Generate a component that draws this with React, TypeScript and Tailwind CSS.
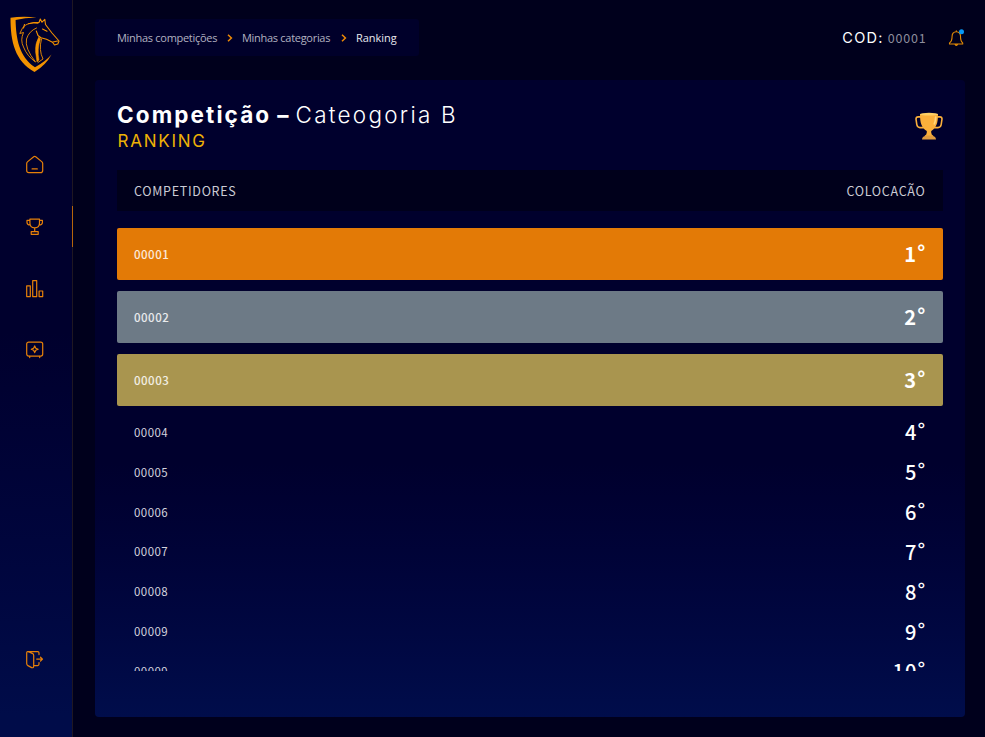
import React from "react";

const cjk = "font-['Noto_Sans_CJK_SC','Noto_Sans',sans-serif]";
const wide = "font-['Inter',sans-serif]";

const podium = [
  { code: "00001", place: "1", bg: "bg-[#e37a06]" },
  { code: "00002", place: "2", bg: "bg-[#6d7a86]" },
  { code: "00003", place: "3", bg: "bg-[#a9954f]" },
];

const others = [
  { code: "00004", place: "4" },
  { code: "00005", place: "5" },
  { code: "00006", place: "6" },
  { code: "00007", place: "7" },
  { code: "00008", place: "8" },
  { code: "00009", place: "9" },
  { code: "00009", place: "10" },
];

function Logo() {
  return (
    <svg width="52" height="58" viewBox="9 15 52 58" fill="none" stroke="#f39200" strokeLinecap="round" strokeLinejoin="round">
      <path d="M10.5 17.8 Q22 16 37 17.5 Q25 17.4 15.6 20 C16 38 19 57 35 67.2 Q45 62 51.5 54.5 Q46 65 34.5 72 C15 61 10.5 42 10.5 17.8Z" fill="#f39200" stroke="none" />
      <path d="M38 23.3 Q27 21.5 22.5 28 L19.8 33.5 L23.5 32.5 Q20 40 23.5 47 Q27 56 35.5 62 Q24.5 48 26.5 39 Q29 31 36.5 28" strokeWidth=".9" />
      <path d="M24.5 24.5 L23.5 28 M28.5 23.8 L34 22.5 L39 22.5 L40.3 19 L42 22.2 L44.8 19.3 L45.5 24.5 L48.5 28.5 L52 33 L59 41 L57.8 44 L54.5 45 L52.5 42.2 L46.5 39.3 L41 37.8 L38 35.5 L36.3 31" strokeWidth="1.1" />
      <path d="M42.5 29 L47 31.3 M53 42 L57.5 41" strokeWidth="1.1" />
      <path d="M38.8 37 Q34.8 44 35.6 52 L37 62 L39 60 Q36.8 49 40.5 39Z" fill="#f39200" strokeWidth=".5" />
      <path d="M41.5 39 Q38.5 50 43 59 L38 62.5" strokeWidth=".9" />
    </svg>
  );
}

const iconProps = {
  width: 20,
  height: 20,
  viewBox: "0.3 0.4 20 20",
  fill: "none",
  stroke: "#e68009",
  strokeWidth: 1.2,
  strokeLinejoin: "round" as const,
  strokeLinecap: "round" as const,
};

function HomeIcon() {
  return (
    <svg {...iconProps}>
      <path d="M9 2.2 Q10 1.5 11 2.2 L17 7 Q18 7.8 18 9 V15.8 Q18 18 15.8 18 H4.2 Q2 18 2 15.8 V9 Q2 7.8 3 7Z M7.4 14.3 H12.6" />
    </svg>
  );
}

function CupIcon() {
  return (
    <svg {...iconProps}>
      <path d="M5.2 2.5 H14.8 V6.5 Q14.8 11.3 10 11.3 Q5.2 11.3 5.2 6.5Z M5.2 3.7 H2.3 V5.8 Q2.3 8.2 5.6 8.4 M14.8 3.7 H17.7 V5.8 Q17.7 8.2 14.4 8.4 M10 11.5 V15 M6.5 15 H13.5 V17.7 H6.5Z" />
    </svg>
  );
}

function BarsIcon() {
  return (
    <svg {...iconProps}>
      <path d="M2 7.2 H5.6 V18 H2Z M8 2 H12 V18 H8Z M14.4 12.4 H18 V18 H14.4Z" />
    </svg>
  );
}

function SafeIcon() {
  return (
    <svg {...iconProps}>
      <rect x="2" y="2.5" width="16" height="14" rx="2" />
      <path d="M5 16.8 V18 M15 16.8 V18 M10 6.3 L11.1 8.7 L13.4 9.7 L11.1 10.7 L10 13 L8.9 10.7 L6.6 9.7 L8.9 8.7Z" />
    </svg>
  );
}

function ExitIcon() {
  return (
    <svg {...iconProps}>
      <path d="M2 3.4 Q2 1.7 3.8 2.2 L8 4 Q9 4.6 9 6 V16.5 Q9 18.6 7 18 L3.2 16 Q2 15.4 2 14Z M3.5 2 H13 Q14.3 2 14.3 3.4 V5 M9.2 16 H13 Q14.3 16 14.3 14.5 V13 M12 9.5 H17.5 M15.8 7.6 L17.8 9.5 L15.8 11.4" />
    </svg>
  );
}

function Bell() {
  return (
    <svg width="18" height="20" viewBox="-1.3 -0.7 18 20" fill="none" stroke="#e38a05" strokeWidth="1.1" strokeLinejoin="round" strokeLinecap="round">
      <path d="M8 3 V2 M8 3 C5 3 3.8 5.2 3.8 7.5 C3.8 11.5 3 13 1.2 14.2 V15.3 H14.4 V14.2 C12.8 13 12.2 11.5 12.2 7.5 C12.2 5.2 11 3 8 3Z M6.8 15.7 Q8 17.6 9.2 15.7" />
      <circle cx="13.2" cy="3.1" r="2.5" fill="#0798f5" stroke="none" />
    </svg>
  );
}

function Trophy() {
  return (
    <svg width="28" height="28" viewBox="0 0 28 28" fill="none">
      <path d="M5.5 4.9 H3.2 Q1 4.9 1 7 L1.8 12.5 Q2.3 15.6 5 15.6 H8.5 M22.5 4.9 H24.8 Q27 4.9 27 7 L26.2 12.5 Q25.7 15.6 23 15.6 H19.5" stroke="#fbb03b" strokeWidth="1.6" strokeLinecap="round" />
      <path d="M5 2 H23 C23 11 21.5 15.5 16.2 19 V20.5 Q16.2 22.6 18.5 24 H9.5 Q11.8 22.6 11.8 20.5 V19 C6.5 15.5 5 11 5 2Z" fill="#fbb03b" />
      <ellipse cx="14" cy="2.2" rx="9" ry="1.4" fill="#ffd064" />
      <path d="M20.7 5 Q20.5 9.5 19.3 11.8" stroke="#ffd67c" strokeWidth="1.7" strokeLinecap="round" />
      <path d="M7 27.5 Q7 24.5 11 23.5 H17 Q21 24.5 21 27.5Z" fill="#e09b3e" />
    </svg>
  );
}

function Chevron() {
  return (
    <svg width="6" height="8" viewBox="0 0 6 8" fill="none" stroke="#ef8a05" strokeWidth="1.5">
      <path d="M1 .8 L4.4 4 L1 7.2" />
    </svg>
  );
}

function Place({ value }: { value: string }) {
  return (
    <>
      {value}
      <span className="relative -top-[2px]">°</span>
    </>
  );
}

export default function App() {
  return (
    <div className="flex h-[737px] w-[985px] overflow-hidden bg-[#00001c] text-white">
      <aside className="flex w-[73px] shrink-0 flex-col border-r border-[#1f1722] bg-linear-to-b from-[#00002d] from-45% to-[#000c49] to-97%">
        <div className="pt-[15px] pl-[9px]">
          <Logo />
        </div>
        <nav className="mt-[71px] flex flex-col">
          <div className="flex h-[41px] items-center pl-[25px]"><HomeIcon /></div>
          <div className="-mr-px mt-[21px] flex h-[41px] items-center justify-between pl-[25px]">
            <CupIcon />
            <span className="h-[41px] w-px bg-[#b5650a]" />
          </div>
          <div className="mt-[21px] flex h-[41px] items-center pl-[25px]"><BarsIcon /></div>
          <div className="mt-[20px] flex h-[41px] items-center pl-[25px]"><SafeIcon /></div>
        </nav>
        <div className="mt-auto pb-[67px] pl-[25px]"><ExitIcon /></div>
      </aside>

      <div className="ml-[22px] flex w-[869.5px] flex-col pt-[19px]">
        <header className="flex h-[37px] items-center">
          <div className="flex h-[37px] w-[324px] items-center rounded-[3px] bg-[#00002a] pl-[22px] font-['Open_Sans',sans-serif] text-[11px] leading-4 tracking-[-0.29px] text-[#b2b2c0]">
            <span className="w-[100px] whitespace-nowrap">Minhas competições</span>
            <span className="ml-[10px]"><Chevron /></span>
            <span className="ml-[9px] w-[89px] whitespace-nowrap">Minhas categorias</span>
            <span className="ml-[10px]"><Chevron /></span>
            <span className="ml-[9px] whitespace-nowrap tracking-[-0.05px] text-[#e8e8ee]">Ranking</span>
          </div>
          <div className="ml-auto flex items-center">
            <span className={`${wide} text-[14.5px] leading-5 tracking-[1.3px]`}>COD:</span>
            <span className={`${cjk} ml-[4px] text-[12.5px] leading-5 tracking-[0.8px] text-[#8d8d9c]`}>00001</span>
            <span className="ml-[20px]"><Bell /></span>
          </div>
        </header>

        <main className="mt-[24px] h-[637px] rounded-[4px] bg-linear-to-b from-[#00002d] from-60% to-[#000d4b] px-[22px]">
          <div className="flex h-[90px] justify-between">
            <div className="pt-[20px]">
              <h1 className={`${wide} whitespace-nowrap text-[22.5px] leading-[29px]`}>
                <span className="font-bold tracking-[2.1px]">Competição</span>
                <span className="font-bold tracking-[0.8px]"> – </span>
                <span className="font-light tracking-[2.25px]">Cateogoria B</span>
              </h1>
              <p className={`${wide} pl-[0.5px] text-[17px] leading-[25px] tracking-[1.75px] text-[#eeb205]`}>RANKING</p>
            </div>
            <div className="pt-[32px]"><Trophy /></div>
          </div>

          <div className={`${cjk} flex h-[41px] items-center justify-between bg-[#00001b] px-[17px] text-[12.5px] leading-5 tracking-[0.7px] text-[#cbcbd5]`}>
            <span>COMPETIDORES</span>
            <span>COLOCACÃO</span>
          </div>

          <div className="mt-[16.6px] h-[443px] overflow-hidden">
            <div className="flex flex-col gap-[11.2px]">
              {podium.map((row) => (
                <div key={row.code} className={`${cjk} ${row.bg} flex h-[52px] items-center justify-between rounded-[2px] px-[17px]`}>
                  <span className="text-[11.5px] font-medium leading-5 tracking-[0.5px] text-white/85">{row.code}</span>
                  <span className="-mr-px mt-px text-[20px] font-bold leading-[30px] tracking-[1.2px]"><Place value={row.place} /></span>
                </div>
              ))}
            </div>
            <div className="mt-[6px]">
              {others.map((row) => (
                <div key={row.place} className={`${cjk} flex h-[39.85px] items-center justify-between px-[17px]`}>
                  <span className="text-[11.5px] leading-5 tracking-[0.45px] text-[#d4d4de]">{row.code}</span>
                  <span className="-mr-px mt-px text-[20px] font-medium leading-[30px] tracking-[1.2px]"><Place value={row.place} /></span>
                </div>
              ))}
            </div>
          </div>
        </main>
      </div>
    </div>
  );
}
